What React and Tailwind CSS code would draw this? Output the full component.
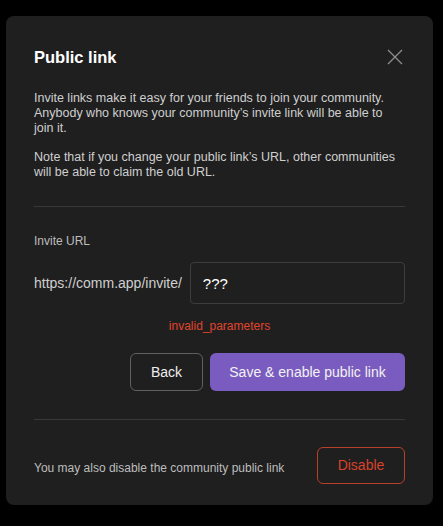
import { useState } from "react";

function CloseIcon() {
  return (
    <svg width="16" height="16" viewBox="0 0 16 16" fill="none">
      <path d="M1 1L15 15M15 1L1 15" stroke="#8f8f8f" strokeWidth="1.3" />
    </svg>
  );
}

function PublicLinkModal() {
  const [url, setUrl] = useState("???");

  return (
    <div className="w-[427px] mt-4 ml-[6px] bg-[#1f1f1f] rounded-lg px-7 pt-[31px] pb-[21px] flex flex-col">
      <div className="flex items-center justify-between h-5">
        <h1 className="text-[16.5px] leading-5 font-semibold text-white">Public link</h1>
        <button className="mr-[2px]">
          <CloseIcon />
        </button>
      </div>

      <div className="mt-6 text-[12.5px] leading-[15px] text-[#cfcfcf]">
        <p>
          Invite links make it easy for your friends to join your community.
          Anybody who knows your community’s invite link will be able to join
          it.
        </p>
        <p className="mt-[14px]">
          Note that if you change your public link’s URL, other communities will
          be able to claim the old URL.
        </p>
      </div>

      <div className="mt-[26px] h-px bg-[#383838]" />

      <label className="mt-[27px] text-[12px] leading-[15px] text-[#bdbdbd]">
        Invite URL
      </label>
      <div className="mt-[13px] flex items-center gap-2">
        <span className="text-[14px] text-[#cfcfcf] whitespace-nowrap">
          https://comm.app/invite/
        </span>
        <input
          className="flex-1 min-w-0 h-[42px] rounded-[4px] border border-[#3c3c3c] bg-transparent px-3 text-[15px] text-white outline-none"
          value={url}
          onChange={(e) => setUrl(e.target.value)}
        />
      </div>
      <div className="mt-[15px] text-center text-[12px] leading-[14px] text-[#e0442c]">
        invalid_parameters
      </div>

      <div className="mt-5 flex justify-end gap-[7px]">
        <button className="w-[73px] h-[38px] rounded-[6px] border border-[#5f5f5f] text-[14px] text-[#eeeeee]">
          Back
        </button>
        <button className="w-[195px] h-[38px] rounded-[6px] bg-[#7a5cc0] text-[14px] text-[#f2f2f2]">
          Save &amp; enable public link
        </button>
      </div>

      <div className="mt-7 h-px bg-[#383838]" />

      <div className="mt-[27px] flex items-center justify-between">
        <span className="text-[12px] text-[#bdbdbd] mt-1">
          You may also disable the community public link
        </span>
        <button className="w-[88px] h-[37px] rounded-[6px] border border-[#b8402a] text-[14px] text-[#d9432b]">
          Disable
        </button>
      </div>
    </div>
  );
}

export default function App() {
  return (
    <div
      className="w-[443px] h-[526px] bg-black overflow-hidden"
      style={{ fontFamily: '"Liberation Sans", Arial, sans-serif' }}
    >
      <PublicLinkModal />
    </div>
  );
}
